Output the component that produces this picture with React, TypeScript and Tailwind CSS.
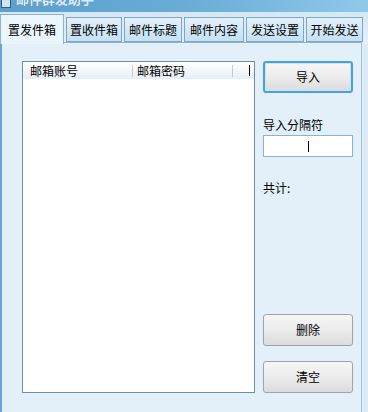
import React from "react";

const font = { fontFamily: '"Noto Sans CJK SC", "Noto Sans", sans-serif' };

function Tab({ label, active, w }: { label: string; active?: boolean; w: string }) {
  if (active) {
    return (
      <div className={"relative z-10 flex h-[30px] items-center justify-center whitespace-nowrap border border-b-0 border-[#8db3d1] bg-[#eaf5fc] text-[12px] text-black " + w}>
        {label}
      </div>
    );
  }
  return (
    <div className={"mb-[2px] flex h-[25px] items-center justify-center whitespace-nowrap border border-[#7fa6c6] bg-gradient-to-b from-[#e2f1fb] to-[#c6e1f3] text-[12px] text-black " + w}>
      {label}
    </div>
  );
}

function Btn({ label, focused }: { label: string; focused?: boolean }) {
  return (
    <div
      className={
        "flex h-[32px] w-[90px] items-center justify-center rounded-[3px] bg-gradient-to-b from-[#f6f6f6] via-[#ececec] to-[#dcdcdc] text-[12px] text-black " +
        (focused
          ? "border-2 border-[#4aa1d6] shadow-[inset_0_0_0_1px_#c8e6f7]"
          : "border border-[#9aa5ad]")
      }
    >
      {label}
    </div>
  );
}

export default function App() {
  return (
    <div className="relative h-[412px] w-[368px] overflow-hidden bg-[#dcebf6]" style={font}>
      {/* title bar */}
      <div className="relative flex h-[12px] items-end overflow-hidden bg-gradient-to-r from-[#5d9fcc] via-[#69acd6] to-[#8fc9ea]">
        <div className="absolute left-[1px] top-[-2px] h-[10px] w-[10px] border border-[#2d5e86] bg-[#cfe4f3]" />
        <div className="absolute left-[16px] top-[-8px] text-[13px] font-bold leading-none text-[#dceaf5] blur-[0.6px]">
          邮件群发助手
        </div>
      </div>
      {/* tabs row */}
      <div className="flex h-[32px] items-end gap-[2px] bg-gradient-to-b from-[#d6e8f5] to-[#e3f0f9]">
        <Tab label="置发件箱" active w="w-[64px]" />
        <Tab label="置收件箱" w="w-[56px]" />
        <Tab label="邮件标题" w="w-[58px]" />
        <Tab label="邮件内容" w="w-[60px]" />
        <Tab label="发送设置" w="w-[58px]" />
        <Tab label="开始发送" w="w-[57px]" />
      </div>
      {/* panel */}
      <div className="relative -mt-[2px] flex h-[370px] w-[362px] border-l-2 border-r border-t border-l-[#6ea4cc] border-r-[#a6c6de] border-t-[#8db3d1] bg-[#e3f0f9] pl-[20px] pt-[18px]">
        {/* list */}
        <div className="flex h-[332px] w-[233px] flex-col border border-[#6d8ea8] bg-white">
          <div className="flex h-[17px] items-center bg-gradient-to-b from-[#ffffff] to-[#e6eef5] text-[12px] leading-none text-black">
            <div className="w-[110px] border-r border-[#bfcbd6] pl-[7px]">邮箱账号</div>
            <div className="w-[100px] border-r border-[#bfcbd6] pl-[4px]">邮箱密码</div>
            <div className="ml-[16px] h-[11px] w-[1px] bg-black" />
          </div>
        </div>
        {/* right column */}
        <div className="ml-[8px] flex flex-col">
          <Btn label="导入" focused />
          <div className="mt-[26px] text-[12px] leading-none text-black">导入分隔符</div>
          <div className="mt-[4px] flex h-[22px] w-[90px] items-center justify-center border border-[#86b4d2] bg-white">
            <div className="h-[11px] w-[1px] bg-black" />
          </div>
          <div className="mt-[25px] text-[12px] leading-none text-black">共计:</div>
          <div className="mt-[120px]">
            <Btn label="删除" />
          </div>
          <div className="mt-[15px]">
            <Btn label="清空" />
          </div>
        </div>
      </div>
    </div>
  );
}
